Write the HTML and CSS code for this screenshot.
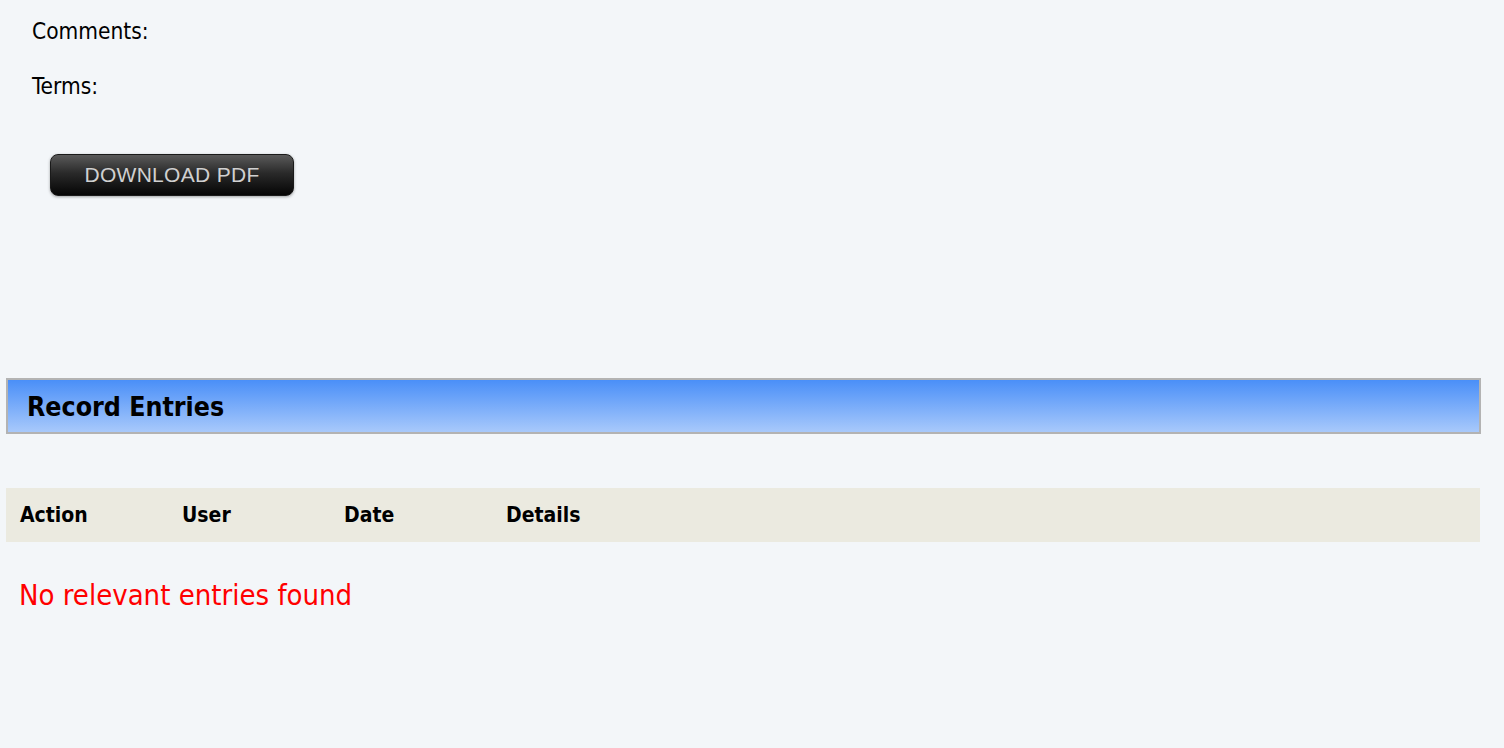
FILE: index.html
```html
<!DOCTYPE html>
<html>
<head>
<meta charset="utf-8">
<link rel="stylesheet" href="styles.css">
</head>
<body>
<div class="page">
  <section class="info">
    <p class="field">Comments:</p>
    <p class="field">Terms:</p>
    <div class="actions">
      <button class="btn-pdf" type="button">DOWNLOAD PDF</button>
    </div>
  </section>

  <section class="entries">
    <h2 class="panel-title">Record Entries</h2>
    <table class="log-table">
      <thead>
        <tr>
          <th>Action</th>
          <th>User</th>
          <th>Date</th>
          <th>Details</th>
        </tr>
      </thead>
    </table>
    <p class="empty">No relevant entries found</p>
  </section>
</div>
</body>
</html>
```

FILE: styles.css
```css
html, body {
  margin: 0;
  padding: 0;
  background: #f3f6f9;
}

body {
  font-family: "DejaVu Sans Condensed", "DejaVu Sans", sans-serif;
  color: #000;
}

.page {
  padding: 0 23px 0 6px;
}

.info {
  padding: 18px 0 0 26px;
}

.field {
  margin: 0 0 29px 0;
  font-size: 22.5px;
  line-height: 26px;
}

.actions {
  padding: 26px 0 0 18px;
}

.btn-pdf {
  width: 244px;
  height: 42px;
  border: 1px solid #1a1a1a;
  border-radius: 8px;
  background: linear-gradient(#5a5a5a 0%, #2a2a2a 45%, #050505 100%);
  box-shadow: 0 1px 3px rgba(0, 0, 0, 0.35);
  color: #d0d0d0;
  font-family: "Liberation Sans", Arial, sans-serif;
  font-size: 21px;
  letter-spacing: 0.3px;
  cursor: pointer;
}

.entries {
  margin-top: 182px;
}

.panel-title {
  margin: 0;
  height: 56px;
  box-sizing: border-box;
  border: 2px solid #b3b3b3;
  background: linear-gradient(#4a8ff8 0%, #a8c9fb 100%);
  padding: 0 0 0 19px;
  font-size: 26.5px;
  line-height: 54px;
  font-weight: bold;
}

.log-table {
  margin-top: 54px;
  width: calc(100% - 1px);
  border-collapse: collapse;
  background: #ebeae0;
}

.log-table th {
  width: 162px;
  height: 54px;
  padding: 0 0 0 14px;
  box-sizing: border-box;
  text-align: left;
  font-size: 21px;
  font-weight: bold;
}

.log-table th:last-child {
  width: auto;
}

.empty {
  margin: 36px 0 0 13px;
  color: #ff0000;
  font-size: 29px;
}
```
